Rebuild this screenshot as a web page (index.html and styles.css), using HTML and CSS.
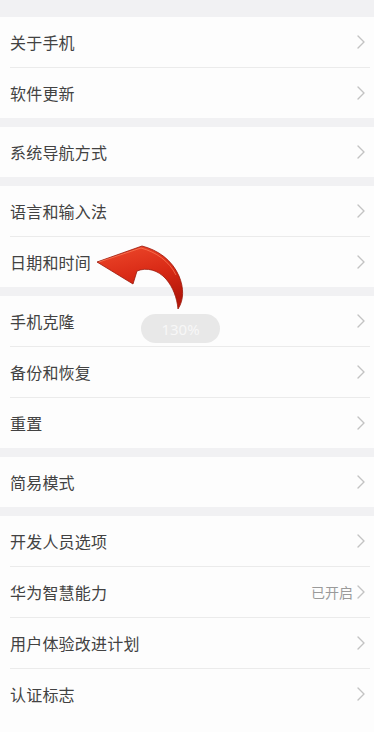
FILE: index.html
```html
<!DOCTYPE html>
<html lang="zh-CN">
<head>
<meta charset="utf-8">
<title>设置</title>
<link rel="stylesheet" href="styles.css">
</head>
<body>
<div class="page">
  <div class="card">
    <div class="row"><span class="label">关于手机</span><span class="chev"><svg viewBox="0 0 8 14" width="8" height="14"><polyline points="1,1 7,7 1,13"/></svg></span></div>
    <div class="divider"></div>
    <div class="row"><span class="label">软件更新</span><span class="chev"><svg viewBox="0 0 8 14" width="8" height="14"><polyline points="1,1 7,7 1,13"/></svg></span></div>
  </div>
  <div class="card">
    <div class="row"><span class="label">系统导航方式</span><span class="chev"><svg viewBox="0 0 8 14" width="8" height="14"><polyline points="1,1 7,7 1,13"/></svg></span></div>
  </div>
  <div class="card">
    <div class="row"><span class="label">语言和输入法</span><span class="chev"><svg viewBox="0 0 8 14" width="8" height="14"><polyline points="1,1 7,7 1,13"/></svg></span></div>
    <div class="divider"></div>
    <div class="row"><span class="label">日期和时间</span><span class="chev"><svg viewBox="0 0 8 14" width="8" height="14"><polyline points="1,1 7,7 1,13"/></svg></span></div>
  </div>
  <div class="card">
    <div class="row"><span class="label">手机克隆</span><span class="chev"><svg viewBox="0 0 8 14" width="8" height="14"><polyline points="1,1 7,7 1,13"/></svg></span></div>
    <div class="divider"></div>
    <div class="row"><span class="label">备份和恢复</span><span class="chev"><svg viewBox="0 0 8 14" width="8" height="14"><polyline points="1,1 7,7 1,13"/></svg></span></div>
    <div class="divider"></div>
    <div class="row"><span class="label">重置</span><span class="chev"><svg viewBox="0 0 8 14" width="8" height="14"><polyline points="1,1 7,7 1,13"/></svg></span></div>
  </div>
  <div class="card">
    <div class="row"><span class="label">简易模式</span><span class="chev"><svg viewBox="0 0 8 14" width="8" height="14"><polyline points="1,1 7,7 1,13"/></svg></span></div>
  </div>
  <div class="card card-last">
    <div class="row"><span class="label">开发人员选项</span><span class="chev"><svg viewBox="0 0 8 14" width="8" height="14"><polyline points="1,1 7,7 1,13"/></svg></span></div>
    <div class="divider"></div>
    <div class="row"><span class="label">华为智慧能力</span><span class="value">已开启</span><span class="chev"><svg viewBox="0 0 8 14" width="8" height="14"><polyline points="1,1 7,7 1,13"/></svg></span></div>
    <div class="divider"></div>
    <div class="row"><span class="label">用户体验改进计划</span><span class="chev"><svg viewBox="0 0 8 14" width="8" height="14"><polyline points="1,1 7,7 1,13"/></svg></span></div>
    <div class="divider"></div>
    <div class="row"><span class="label">认证标志</span><span class="chev"><svg viewBox="0 0 8 14" width="8" height="14"><polyline points="1,1 7,7 1,13"/></svg></span></div>
  </div>

  <svg class="arrow" viewBox="90 240 100 75" width="100" height="75">
    <defs>
      <linearGradient id="red" x1="0" y1="0" x2="0.3" y2="1">
        <stop offset="0" stop-color="#ee4a2c"/>
        <stop offset="0.55" stop-color="#d92a16"/>
        <stop offset="1" stop-color="#b5170a"/>
      </linearGradient>
    </defs>
    <path d="M97,262 L142,246 C158,250 172,260 179,276 C184,288 184,300 178,309 C177,298 173,287 166,279 C158,270 147,267 137,271 L133,284 Z" fill="url(#red)" stroke="#9a1609" stroke-width="0.8" stroke-linejoin="round"/>
    <path d="M99,262 L141,248 C156,252 169,261 176,275" fill="none" stroke="#ff8a66" stroke-width="1" opacity="0.6"/>
  </svg>
  <div class="zoom-pill">130%</div>
</div>
</body>
</html>
```

FILE: styles.css
```css
html, body {
  margin: 0;
  padding: 0;
}
body {
  background: #f1f1f3;
  font-family: "Noto Sans CJK SC", "Noto Sans", sans-serif;
  width: 374px;
  height: 732px;
  overflow: hidden;
}
.page {
  position: relative;
  padding-top: 17px;
  display: flex;
  flex-direction: column;
  gap: 9px;
}
.card {
  background: #fdfdfd;
  display: flex;
  flex-direction: column;
}
.card-last {
  padding-bottom: 40px;
}
.row {
  height: 50px;
  display: flex;
  align-items: center;
  padding: 0 9px 0 10px;
}
.label {
  flex: 1;
  font-size: 16px;
  color: #424242;
  letter-spacing: 0.2px;
}
.value {
  font-size: 14px;
  color: #9a9a9a;
  margin-right: 4px;
}
.chev {
  display: flex;
  align-items: center;
  width: 8px;
}
.chev polyline {
  fill: none;
  stroke: #c3c3c3;
  stroke-width: 1.4;
  stroke-linecap: round;
  stroke-linejoin: round;
}
.divider {
  height: 1px;
  background: #ebebeb;
  margin: 0 4px 0 10px;
}
.arrow {
  position: absolute;
  left: 90px;
  top: 240px;
}
.zoom-pill {
  position: absolute;
  left: 141px;
  top: 314px;
  width: 79px;
  height: 29px;
  border-radius: 15px;
  background: #e8e8e8;
  color: #f7f7f7;
  font-size: 15px;
  display: flex;
  align-items: center;
  justify-content: center;
  font-family: "Noto Sans", sans-serif;
}
```
